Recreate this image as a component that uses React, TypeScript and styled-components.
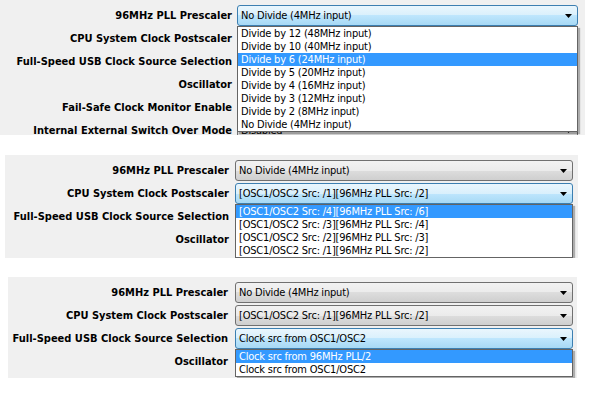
import React from 'react';
import styled, { createGlobalStyle } from 'styled-components';

const GlobalStyle = createGlobalStyle`
  html, body { margin: 0; padding: 0; background: #ffffff; }
  body { width: 589px; height: 399px; overflow: hidden; }
`;

const FONT = `"DejaVu Sans Condensed", "DejaVu Sans", sans-serif`;

const Page = styled.div`
  display: flex;
  flex-direction: column;
  width: 589px;
  height: 399px;
`;

const Panel = styled.section<{
  $top: number;
  $left: number;
  $width: number;
  $height: number;
  $labelW: number;
  $gap: number;
  $selW: number;
}>`
  --label-w: ${(p) => p.$labelW}px;
  --gap: ${(p) => p.$gap}px;
  --sel-w: ${(p) => p.$selW}px;
  margin-top: ${(p) => p.$top}px;
  margin-left: ${(p) => p.$left}px;
  width: ${(p) => p.$width}px;
  height: ${(p) => p.$height}px;
  flex: none;
  box-sizing: border-box;
  padding-top: 4px;
  background: #f0f0f0;
  overflow: hidden;
  display: flex;
  flex-direction: column;
`;

const Row = styled.div`
  display: grid;
  grid-template-columns: var(--label-w) var(--sel-w);
  column-gap: var(--gap);
  align-items: center;
  height: 23px;
  flex: none;
`;

const Label = styled.label`
  font-family: ${FONT};
  font-stretch: condensed;
  font-weight: bold;
  font-size: 11px;
  color: #000;
  text-align: right;
  white-space: nowrap;
`;

const Combo = styled.div<{ $open?: boolean }>`
  position: relative;
  height: 21px;
  box-sizing: border-box;
  display: flex;
  align-items: center;
  justify-content: space-between;
  padding: 0 5px 0 3px;
  border: 1px solid ${(p) => (p.$open ? '#3c7fb1' : '#707070')};
  border-radius: 3px;
  background: ${(p) =>
    p.$open
      ? 'linear-gradient(#eaf6fd 0%, #d9f0fc 50%, #bee6fd 50%, #a7d9f5 100%)'
      : 'linear-gradient(#f2f2f2 0%, #ebebeb 50%, #dddddd 50%, #cfcfcf 100%)'};
`;

const Value = styled.span`
  font-family: ${FONT};
  font-stretch: condensed;
  font-size: 11px;
  letter-spacing: -0.2px;
  color: #000;
  white-space: nowrap;
`;

const Arrow = styled.svg`
  flex: none;
  width: 7px;
  height: 4px;
`;

const List = styled.ul`
  position: absolute;
  z-index: 2;
  top: calc(100% + 1px);
  left: -1px;
  right: -1px;
  margin: 0;
  padding: 0;
  list-style: none;
  background: #fff;
  border: 1px solid #646464;
  box-shadow: 2px 2px 1px rgba(0, 0, 0, 0.28);
`;

const Item = styled.li<{ $selected?: boolean }>`
  height: 13px;
  line-height: 13px;
  padding-left: 3px;
  font-family: ${FONT};
  font-stretch: condensed;
  font-size: 11px;
  letter-spacing: -0.2px;
  white-space: nowrap;
  color: ${(p) => (p.$selected ? '#ffffff' : '#000000')};
  background: ${(p) => (p.$selected ? '#3399ff' : 'transparent')};
`;

type Field = {
  label: string;
  value: string;
  options?: string[];
  selected?: number;
};

const Select: React.FC<{ field: Field }> = ({ field }) => (
  <Combo $open={!!field.options}>
    <Value>{field.value}</Value>
    <Arrow viewBox="0 0 7 4">
      <path d="M0 0 H7 L3.5 4 Z" fill="#000" />
    </Arrow>
    {field.options && (
      <List>
        {field.options.map((o, i) => (
          <Item key={o} $selected={i === field.selected}>
            {o}
          </Item>
        ))}
      </List>
    )}
  </Combo>
);

const PRESCALER = 'No Divide (4MHz input)';
const POSTSCALER = '[OSC1/OSC2 Src: /1][96MHz PLL Src: /2]';
const USBSRC = 'Clock src from OSC1/OSC2';
const OSC = 'HS oscillator, PLL enabled (HSPLL)';

const panel1: Field[] = [
  {
    label: '96MHz PLL Prescaler',
    value: PRESCALER,
    options: [
      'Divide by 12 (48MHz input)',
      'Divide by 10 (40MHz input)',
      'Divide by 6 (24MHz input)',
      'Divide by 5 (20MHz input)',
      'Divide by 4 (16MHz input)',
      'Divide by 3 (12MHz input)',
      'Divide by 2 (8MHz input)',
      'No Divide (4MHz input)',
    ],
    selected: 2,
  },
  { label: 'CPU System Clock Postscaler', value: POSTSCALER },
  { label: 'Full-Speed USB Clock Source Selection', value: USBSRC },
  { label: 'Oscillator', value: OSC },
  { label: 'Fail-Safe Clock Monitor Enable', value: 'Disabled' },
  { label: 'Internal External Switch Over Mode', value: 'Disabled' },
];

const panel2: Field[] = [
  { label: '96MHz PLL Prescaler', value: PRESCALER },
  {
    label: 'CPU System Clock Postscaler',
    value: POSTSCALER,
    options: [
      '[OSC1/OSC2 Src: /4][96MHz PLL Src: /6]',
      '[OSC1/OSC2 Src: /3][96MHz PLL Src: /4]',
      '[OSC1/OSC2 Src: /2][96MHz PLL Src: /3]',
      '[OSC1/OSC2 Src: /1][96MHz PLL Src: /2]',
    ],
    selected: 0,
  },
  { label: 'Full-Speed USB Clock Source Selection', value: USBSRC },
  { label: 'Oscillator', value: OSC },
  { label: 'Fail-Safe Clock Monitor Enable', value: 'Disabled' },
];

const panel3: Field[] = [
  { label: '96MHz PLL Prescaler', value: PRESCALER },
  { label: 'CPU System Clock Postscaler', value: POSTSCALER },
  {
    label: 'Full-Speed USB Clock Source Selection',
    value: USBSRC,
    options: ['Clock src from 96MHz PLL/2', 'Clock src from OSC1/OSC2'],
    selected: 0,
  },
  { label: 'Oscillator', value: OSC },
];

const Rows: React.FC<{ fields: Field[] }> = ({ fields }) => (
  <>
    {fields.map((f) => (
      <Row key={f.label}>
        <Label>{f.label}</Label>
        <Select field={f} />
      </Row>
    ))}
  </>
);

export default function App() {
  return (
    <>
      <GlobalStyle />
      <Page>
        <Panel $top={0} $left={0} $width={585} $height={135} $labelW={232} $gap={5} $selW={341}>
          <Rows fields={panel1} />
        </Panel>
        <Panel $top={20} $left={5} $width={573} $height={103} $labelW={224} $gap={6} $selW={338}>
          <Rows fields={panel2} />
        </Panel>
        <Panel $top={19} $left={8} $width={569} $height={101} $labelW={220} $gap={7} $selW={338}>
          <Rows fields={panel3} />
        </Panel>
      </Page>
    </>
  );
}
